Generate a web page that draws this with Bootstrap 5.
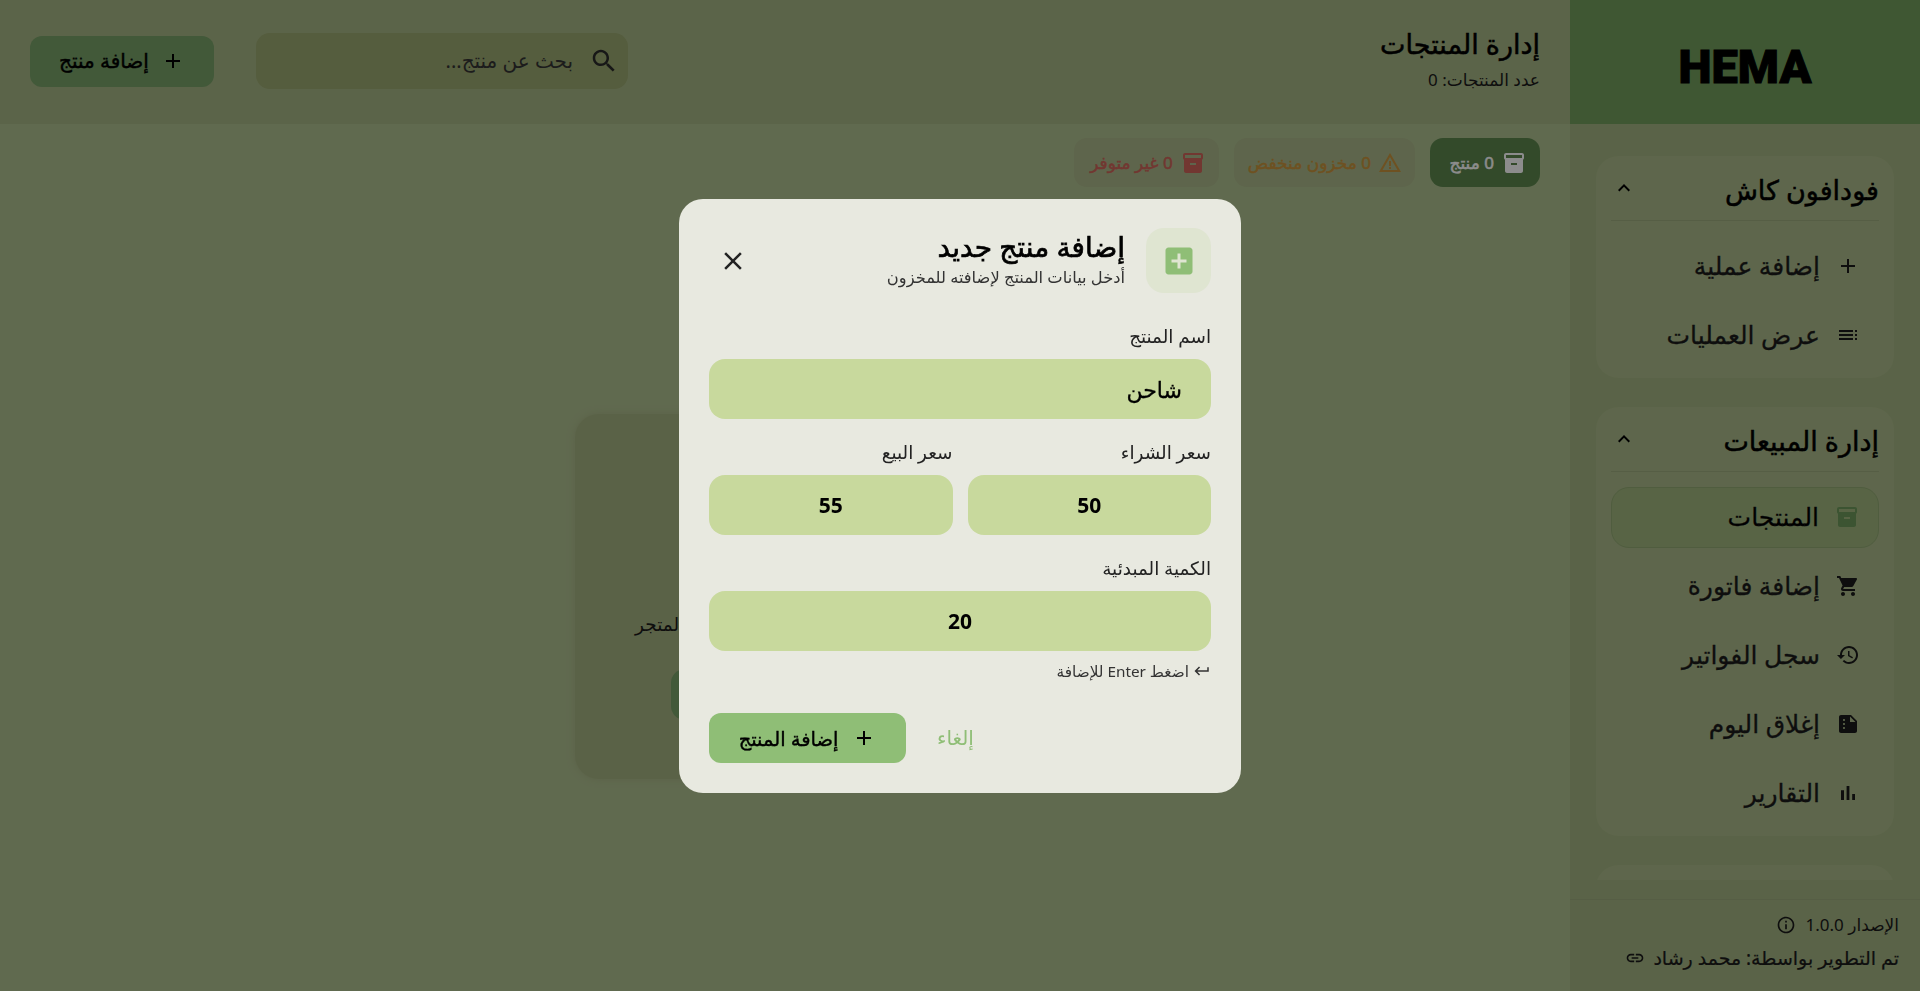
<!DOCTYPE html>
<html lang="ar" dir="rtl">
<head>
    <meta charset="UTF-8">
    <meta name="viewport" content="width=device-width, initial-scale=1.0">
    <title>HEMA - إدارة المنتجات</title>
    <link rel="stylesheet" href="https://cdn.jsdelivr.net/npm/bootstrap@5.3.0/dist/css/bootstrap.min.css">
    <style>
        body {
            font-family: "Noto Sans", "DejaVu Sans", sans-serif;
            background-color: #b0c191;
            color: #1a1a1a;
            height: 991px;
            overflow: hidden;
        }
        .ic { width: 24px; height: 24px; fill: currentColor; flex-shrink: 0; }

        /* sidebar */
        .side-wrap { width: 350px; flex-shrink: 0; background-color: #a4b483; }
        .side-logo {
            height: 124px;
            background-color: #739e5d;
            font-family: "Roboto", sans-serif;
            font-weight: 900;
            font-size: 47px;
            -webkit-text-stroke: 1px #000;
            color: #000;
            padding-top: 11px;
        }
        .side-scroll { height: 756px; margin-bottom: 19px; padding: 32px 26px 0; overflow: hidden; }
        .side-group { background-color: #abbb8a; border-radius: 22px; padding: 0 15px 12px; margin-bottom: 29px; }
        .side-head { height: 65px; border-bottom: 1px solid #9dac7e; font-size: 27px; -webkit-text-stroke: .5px #000; color: #000; padding: 0 0 0 1px; margin-bottom: 15px; }
        .side-head span { padding-top: 4px; }
        .side-link { height: 61px; border-radius: 18px; padding: 0 19px 2px; gap: 16px; font-size: 25px; -webkit-text-stroke: .3px #1a1a1a; color: #1a1a1a; margin-top: 8px; text-decoration: none; }
        .side-head + .side-link { margin-top: 0; }
        .side-link.on { background-color: #a0b67f; border: 1px solid #92a973; color: #000; }
        .side-link.on .ic { color: #6d9a5c; }
        .side-foot { height: 92px; border-top: 1px solid #9dac7e; padding: 12px 21px 0; font-size: 17px; }
        .side-foot .ic { width: 20px; height: 20px; }
        .foot-ver { gap: 10px; margin-bottom: 6px; }
        .foot-dev { font-size: 19px; -webkit-text-stroke: .2px #1a1a1a; gap: 8px; }

        /* header */
        .top-bar { height: 124px; background-color: #a7b685; padding: 0 30px; }
        .top-head { padding-bottom: 6px; }
        .top-title { font-size: 27px; -webkit-text-stroke: .5px #000; color: #000; line-height: 36px; margin-bottom: 6px; }
        .top-sub { font-size: 17px; line-height: 24px; }
        .top-tools { gap: 42px; padding-bottom: 2px; }
        .search-box { width: 372px; height: 56px; background-color: #9ba971; border-radius: 14px; padding: 0 9px; gap: 14px; }
        .search-box .ic { width: 30px; height: 30px; color: #2a2a2a; }
        .search-box input { background: none; border: 0; outline: 0; font-size: 20px; width: 100%; color: #1a1a1a; font-family: inherit; }
        .search-box input::placeholder { color: #333; opacity: 1; }
        .add-top { width: 184px; height: 51px; background-color: #78a269; border: 0; border-radius: 12px; gap: 12px; font-size: 20px; -webkit-text-stroke: .4px #000; color: #000; }

        /* stats */
        .stat-row { padding: 14px 30px 0; gap: 15px; }
        .stat-pill { height: 49px; padding: 0 14px 0 16px; border-radius: 13px; background-color: #abb98a; font-size: 17px; -webkit-text-stroke: .5px currentColor; gap: 8px; }
        .stat-ok { background-color: #5d874e; color: #fff; width: 110px; }
        .stat-low { color: #c9943c; padding: 0 13px 0 14px; gap: 7px; }
        .stat-out { color: #cf6459; }

        /* empty state */
        .empty-wrap { padding-top: 227px; }
        .empty-box { width: 420px; height: 365px; background-color: #a5b282; box-shadow: 0 0 8px #a5b282; border-radius: 24px; padding-bottom: 59px; }
        .empty-text { font-size: 18.5px; margin-bottom: 31px; }
        .empty-btn { width: 228px; height: 51px; background-color: #78a269; border: 0; border-radius: 14px; font-size: 19px; }

        /* modal */
        .modal { --bs-modal-width: 562px; }
        .modal-backdrop { --bs-backdrop-opacity: .45; }
        .modal-dialog { margin-top: 0; margin-bottom: 0; min-height: 991px; }
        .dlg {
            background-color: #e8e9e0;
            border: 0;
            border-radius: 24px;
            height: 594px;
            padding: 29px 30px 30px;
        }
        .dlg-top { margin-bottom: 31px; }
        .dlg-tile { width: 65px; height: 65px; background-color: #dfe5d1; border-radius: 18px; color: #8fbe76; }
        .dlg-tile .ic { width: 36px; height: 36px; margin-top: 1px; }
        .dlg-heading { gap: 21px; }
        .dlg-title { font-size: 28px; -webkit-text-stroke: .7px #000; color: #000; line-height: 30px; margin-top: 1px; }
        .dlg-sub { font-size: 16.3px; color: #333; line-height: 26px; margin-top: 3px; }
        .dlg-close { background: none; border: 0; padding: 2px 0 0; color: #222; margin-left: 9px; }
        .dlg-close .ic { width: 30px; height: 30px; }
        .fld-label { font-size: 18.4px; color: #222; margin-bottom: 11px; line-height: 24px; display: block; }
        .fld-group { margin-bottom: 21px; }
        .fld-row { --bs-gutter-x: 15px; --bs-gutter-y: 0; }
        .fld-input {
            height: 60px;
            background-color: #c8d99d;
            border: 0;
            border-radius: 16px;
            font-size: 22px;
            -webkit-text-stroke: .3px #000;
            color: #000;
            padding: 0 29px;
        }
        .fld-input:focus { background-color: #c8d99d; box-shadow: none; }
        .fld-num { text-align: center; font-weight: 700; font-size: 21px; -webkit-text-stroke: 0; }
        .dlg-hint { font-size: 15.3px; color: #333; gap: 4px; margin-top: 9px; }
        .dlg-hint .ic { width: 18px; height: 18px; }
        .dlg-foot { margin-top: 31px; }
        .dlg-save { width: 197px; height: 50px; background-color: #8fbe76; border: 0; border-radius: 12px; gap: 14px; font-size: 19.5px; -webkit-text-stroke: .4px #000; color: #000; }
        .dlg-cancel { background: none; border: 0; color: #8fbe76; font-size: 20px; padding: 0 31px; }
    </style>
</head>
<body class="d-flex">
    <svg class="d-none">
        <symbol id="i-add" viewBox="0 0 24 24"><path d="M19 13h-6v6h-2v-6H5v-2h6V5h2v6h6v2z"/></symbol>
        <symbol id="i-close" viewBox="0 0 24 24"><path d="M19 6.41L17.59 5 12 10.59 6.41 5 5 6.41 10.59 12 5 17.59 6.41 19 12 13.41 17.59 19 19 17.59 13.41 12z"/></symbol>
        <symbol id="i-search" viewBox="0 0 24 24"><path d="M15.5 14h-.79l-.28-.27C15.41 12.59 16 11.11 16 9.5 16 5.91 13.09 3 9.5 3S3 5.91 3 9.5 5.91 16 9.5 16c1.61 0 3.09-.59 4.23-1.57l.27.28v.79l5 4.99L20.49 19l-4.99-5zm-6 0C7.01 14 5 11.99 5 9.5S7.01 5 9.5 5 14 7.01 14 9.5 11.99 14 9.5 14z"/></symbol>
        <symbol id="i-box" viewBox="0 0 24 24"><path d="M20 2H4c-1 0-2 .9-2 2v3.01c0 .72.43 1.34 1 1.69V20c0 1.1 1.1 2 2 2h14c.9 0 2-.9 2-2V8.7c.57-.35 1-.97 1-1.69V4c0-1.1-1-2-2-2zm-5 12H9v-2h6v2zm5-7H4V4l16-.02V7z"/></symbol>
        <symbol id="i-warn" viewBox="0 0 24 24"><path d="M12 5.99L19.53 19H4.47L12 5.99M12 2L1 21h22L12 2zm1 14h-2v2h2v-2zm0-6h-2v5h2v-5z"/></symbol>
        <symbol id="i-cart" viewBox="0 0 24 24"><path d="M7 18c-1.1 0-1.99.9-1.99 2S5.9 22 7 22s2-.9 2-2-.9-2-2-2zM1 2v2h2l3.6 7.59-1.35 2.45c-.16.28-.25.61-.25.96 0 1.1.9 2 2 2h12v-2H7.42c-.14 0-.25-.11-.25-.25l.03-.12.9-1.63h7.45c.75 0 1.41-.41 1.75-1.03l3.58-6.49c.08-.14.12-.31.12-.48 0-.55-.45-1-1-1H5.21l-.94-2H1zm16 16c-1.1 0-1.99.9-1.99 2s.89 2 1.99 2 2-.9 2-2-.9-2-2-2z"/></symbol>
        <symbol id="i-history" viewBox="0 0 24 24"><path d="M13 3c-4.97 0-9 4.03-9 9H1l3.89 3.89.07.14L9 12H6c0-3.87 3.13-7 7-7s7 3.13 7 7-3.13 7-7 7c-1.93 0-3.68-.79-4.94-2.06l-1.42 1.42C8.27 19.99 10.51 21 13 21c4.97 0 9-4.03 9-9s-4.03-9-9-9zm-1 5v5l4.28 2.54.72-1.21-3.5-2.08V8H12z"/></symbol>
        <symbol id="i-doc" viewBox="0 0 24 24"><path d="M15 3H5c-1.1 0-1.99.9-1.99 2L3 19c0 1.1.89 2 1.99 2H19c1.1 0 2-.9 2-2V9l-6-6zM8 17c-.55 0-1-.45-1-1s.45-1 1-1 1 .45 1 1-.45 1-1 1zm0-4c-.55 0-1-.45-1-1s.45-1 1-1 1 .45 1 1-.45 1-1 1zm0-4c-.55 0-1-.45-1-1s.45-1 1-1 1 .45 1 1-.45 1-1 1zm6 1V4.5l5.5 5.5H14z"/></symbol>
        <symbol id="i-chart" viewBox="0 0 24 24"><path d="M5 9.2h3V19H5zM10.6 5h2.8v14h-2.8zm5.6 8H19v6h-2.8z"/></symbol>
        <symbol id="i-toc" viewBox="0 0 24 24"><path d="M3 9h14V7H3v2zm0 4h14v-2H3v2zm0 4h14v-2H3v2zm16 0h2v-2h-2v2zm0-10v2h2V7h-2zm0 6h2v-2h-2v2z"/></symbol>
        <symbol id="i-up" viewBox="0 0 24 24"><path d="M12 8l-6 6 1.41 1.41L12 10.83l4.59 4.58L18 14z"/></symbol>
        <symbol id="i-info" viewBox="0 0 24 24"><path d="M11 7h2v2h-2zm0 4h2v6h-2zm1-9C6.48 2 2 6.48 2 12s4.48 10 10 10 10-4.48 10-10S17.52 2 12 2zm0 18c-4.41 0-8-3.59-8-8s3.59-8 8-8 8 3.59 8 8-3.59 8-8 8z"/></symbol>
        <symbol id="i-link" viewBox="0 0 24 24"><path d="M3.9 12c0-1.71 1.39-3.1 3.1-3.1h4V7H7c-2.76 0-5 2.24-5 5s2.24 5 5 5h4v-1.9H7c-1.71 0-3.1-1.39-3.1-3.1zM8 13h8v-2H8v2zm9-6h-4v1.9h4c1.71 0 3.1 1.39 3.1 3.1s-1.39 3.1-3.1 3.1h-4V17h4c2.76 0 5-2.24 5-5s-2.24-5-5-5z"/></symbol>
        <symbol id="i-return" viewBox="0 0 24 24"><path d="M19 7v4H5.83l3.58-3.59L8 6l-6 6 6 6 1.41-1.41L5.83 13H21V7z"/></symbol>
        <symbol id="i-addbox" viewBox="0 0 24 24"><path d="M19 3H5c-1.11 0-2 .9-2 2v14c0 1.1.89 2 2 2h14c1.1 0 2-.9 2-2V5c0-1.1-.9-2-2-2zm-2 10h-4v4h-2v-4H7v-2h4V7h2v4h4v2z"/></symbol>
    </svg>

    <!-- Sidebar -->
    <aside class="side-wrap d-flex flex-column">
        <div class="side-logo d-flex align-items-center justify-content-center" dir="ltr">HEMA</div>
        <div class="side-scroll">
            <section class="side-group">
                <div class="side-head d-flex align-items-center justify-content-between"><span>فودافون كاش</span><svg class="ic"><use href="#i-up"/></svg></div>
                <a class="side-link d-flex align-items-center" href="#"><svg class="ic"><use href="#i-add"/></svg>إضافة عملية</a>
                <a class="side-link d-flex align-items-center" href="#"><svg class="ic"><use href="#i-toc"/></svg>عرض العمليات</a>
            </section>
            <section class="side-group">
                <div class="side-head d-flex align-items-center justify-content-between"><span>إدارة المبيعات</span><svg class="ic"><use href="#i-up"/></svg></div>
                <a class="side-link on d-flex align-items-center" href="#"><svg class="ic"><use href="#i-box"/></svg>المنتجات</a>
                <a class="side-link d-flex align-items-center" href="#"><svg class="ic"><use href="#i-cart"/></svg>إضافة فاتورة</a>
                <a class="side-link d-flex align-items-center" href="#"><svg class="ic"><use href="#i-history"/></svg>سجل الفواتير</a>
                <a class="side-link d-flex align-items-center" href="#"><svg class="ic"><use href="#i-doc"/></svg>إغلاق اليوم</a>
                <a class="side-link d-flex align-items-center" href="#"><svg class="ic"><use href="#i-chart"/></svg>التقارير</a>
            </section>
            <section class="side-group"><div class="side-head"></div></section>
        </div>
        <footer class="side-foot">
            <div class="foot-ver d-flex align-items-center"><span>الإصدار 1.0.0</span><svg class="ic"><use href="#i-info"/></svg></div>
            <div class="foot-dev d-flex align-items-center"><span>تم التطوير بواسطة: محمد رشاد</span><svg class="ic"><use href="#i-link"/></svg></div>
        </footer>
    </aside>

    <!-- Main -->
    <main class="flex-grow-1 d-flex flex-column">
        <header class="top-bar d-flex align-items-center justify-content-between">
            <div class="top-head">
                <div class="top-title">إدارة المنتجات</div>
                <div class="top-sub">عدد المنتجات: 0</div>
            </div>
            <div class="top-tools d-flex align-items-center">
                <div class="search-box d-flex align-items-center">
                    <svg class="ic"><use href="#i-search"/></svg>
                    <input type="text" placeholder="بحث عن منتج...">
                </div>
                <button class="add-top d-flex align-items-center justify-content-center"><svg class="ic"><use href="#i-add"/></svg>إضافة منتج</button>
            </div>
        </header>

        <div class="stat-row d-flex">
            <div class="stat-pill stat-ok d-flex align-items-center"><svg class="ic"><use href="#i-box"/></svg>0 منتج</div>
            <div class="stat-pill stat-low d-flex align-items-center"><svg class="ic"><use href="#i-warn"/></svg>0 مخزون منخفض</div>
            <div class="stat-pill stat-out d-flex align-items-center"><svg class="ic"><use href="#i-box"/></svg>0 غير متوفر</div>
        </div>

        <div class="empty-wrap d-flex justify-content-center">
            <div class="empty-box d-flex flex-column align-items-center justify-content-end">
                <div class="empty-text">أضف أول منتج لبدء إدارة مخزون المتجر</div>
                <button class="empty-btn">إضافة منتج</button>
            </div>
        </div>
    </main>

    <!-- Add product dialog -->
    <div class="modal-backdrop show"></div>
    <div class="modal d-block" tabindex="-1">
        <div class="modal-dialog modal-dialog-centered">
            <div class="modal-content dlg">
                <div class="dlg-top d-flex align-items-center justify-content-between">
                    <div class="dlg-heading d-flex align-items-center">
                        <div class="dlg-tile d-flex align-items-center justify-content-center"><svg class="ic"><use href="#i-addbox"/></svg></div>
                        <div>
                            <div class="dlg-title">إضافة منتج جديد</div>
                            <div class="dlg-sub">أدخل بيانات المنتج لإضافته للمخزون</div>
                        </div>
                    </div>
                    <button class="dlg-close" aria-label="إغلاق"><svg class="ic"><use href="#i-close"/></svg></button>
                </div>
                <form>
                    <div class="fld-group">
                        <label class="fld-label">اسم المنتج</label>
                        <input class="form-control fld-input" type="text" value="شاحن">
                    </div>
                    <div class="row fld-row fld-group">
                        <div class="col-6">
                            <label class="fld-label">سعر الشراء</label>
                            <input class="form-control fld-input fld-num" type="text" value="50">
                        </div>
                        <div class="col-6">
                            <label class="fld-label">سعر البيع</label>
                            <input class="form-control fld-input fld-num" type="text" value="55">
                        </div>
                    </div>
                    <div>
                        <label class="fld-label">الكمية المبدئية</label>
                        <input class="form-control fld-input fld-num" type="text" value="20">
                    </div>
                    <div class="dlg-hint d-flex align-items-center"><svg class="ic"><use href="#i-return"/></svg>اضغط Enter للإضافة</div>
                    <div class="dlg-foot d-flex align-items-center justify-content-end">
                        <button type="button" class="dlg-cancel">إلغاء</button>
                        <button type="button" class="dlg-save d-flex align-items-center justify-content-center"><svg class="ic"><use href="#i-add"/></svg>إضافة المنتج</button>
                    </div>
                </form>
            </div>
        </div>
    </div>

    <script src="https://cdn.jsdelivr.net/npm/bootstrap@5.3.0/dist/js/bootstrap.bundle.min.js"></script>
</body>
</html>
